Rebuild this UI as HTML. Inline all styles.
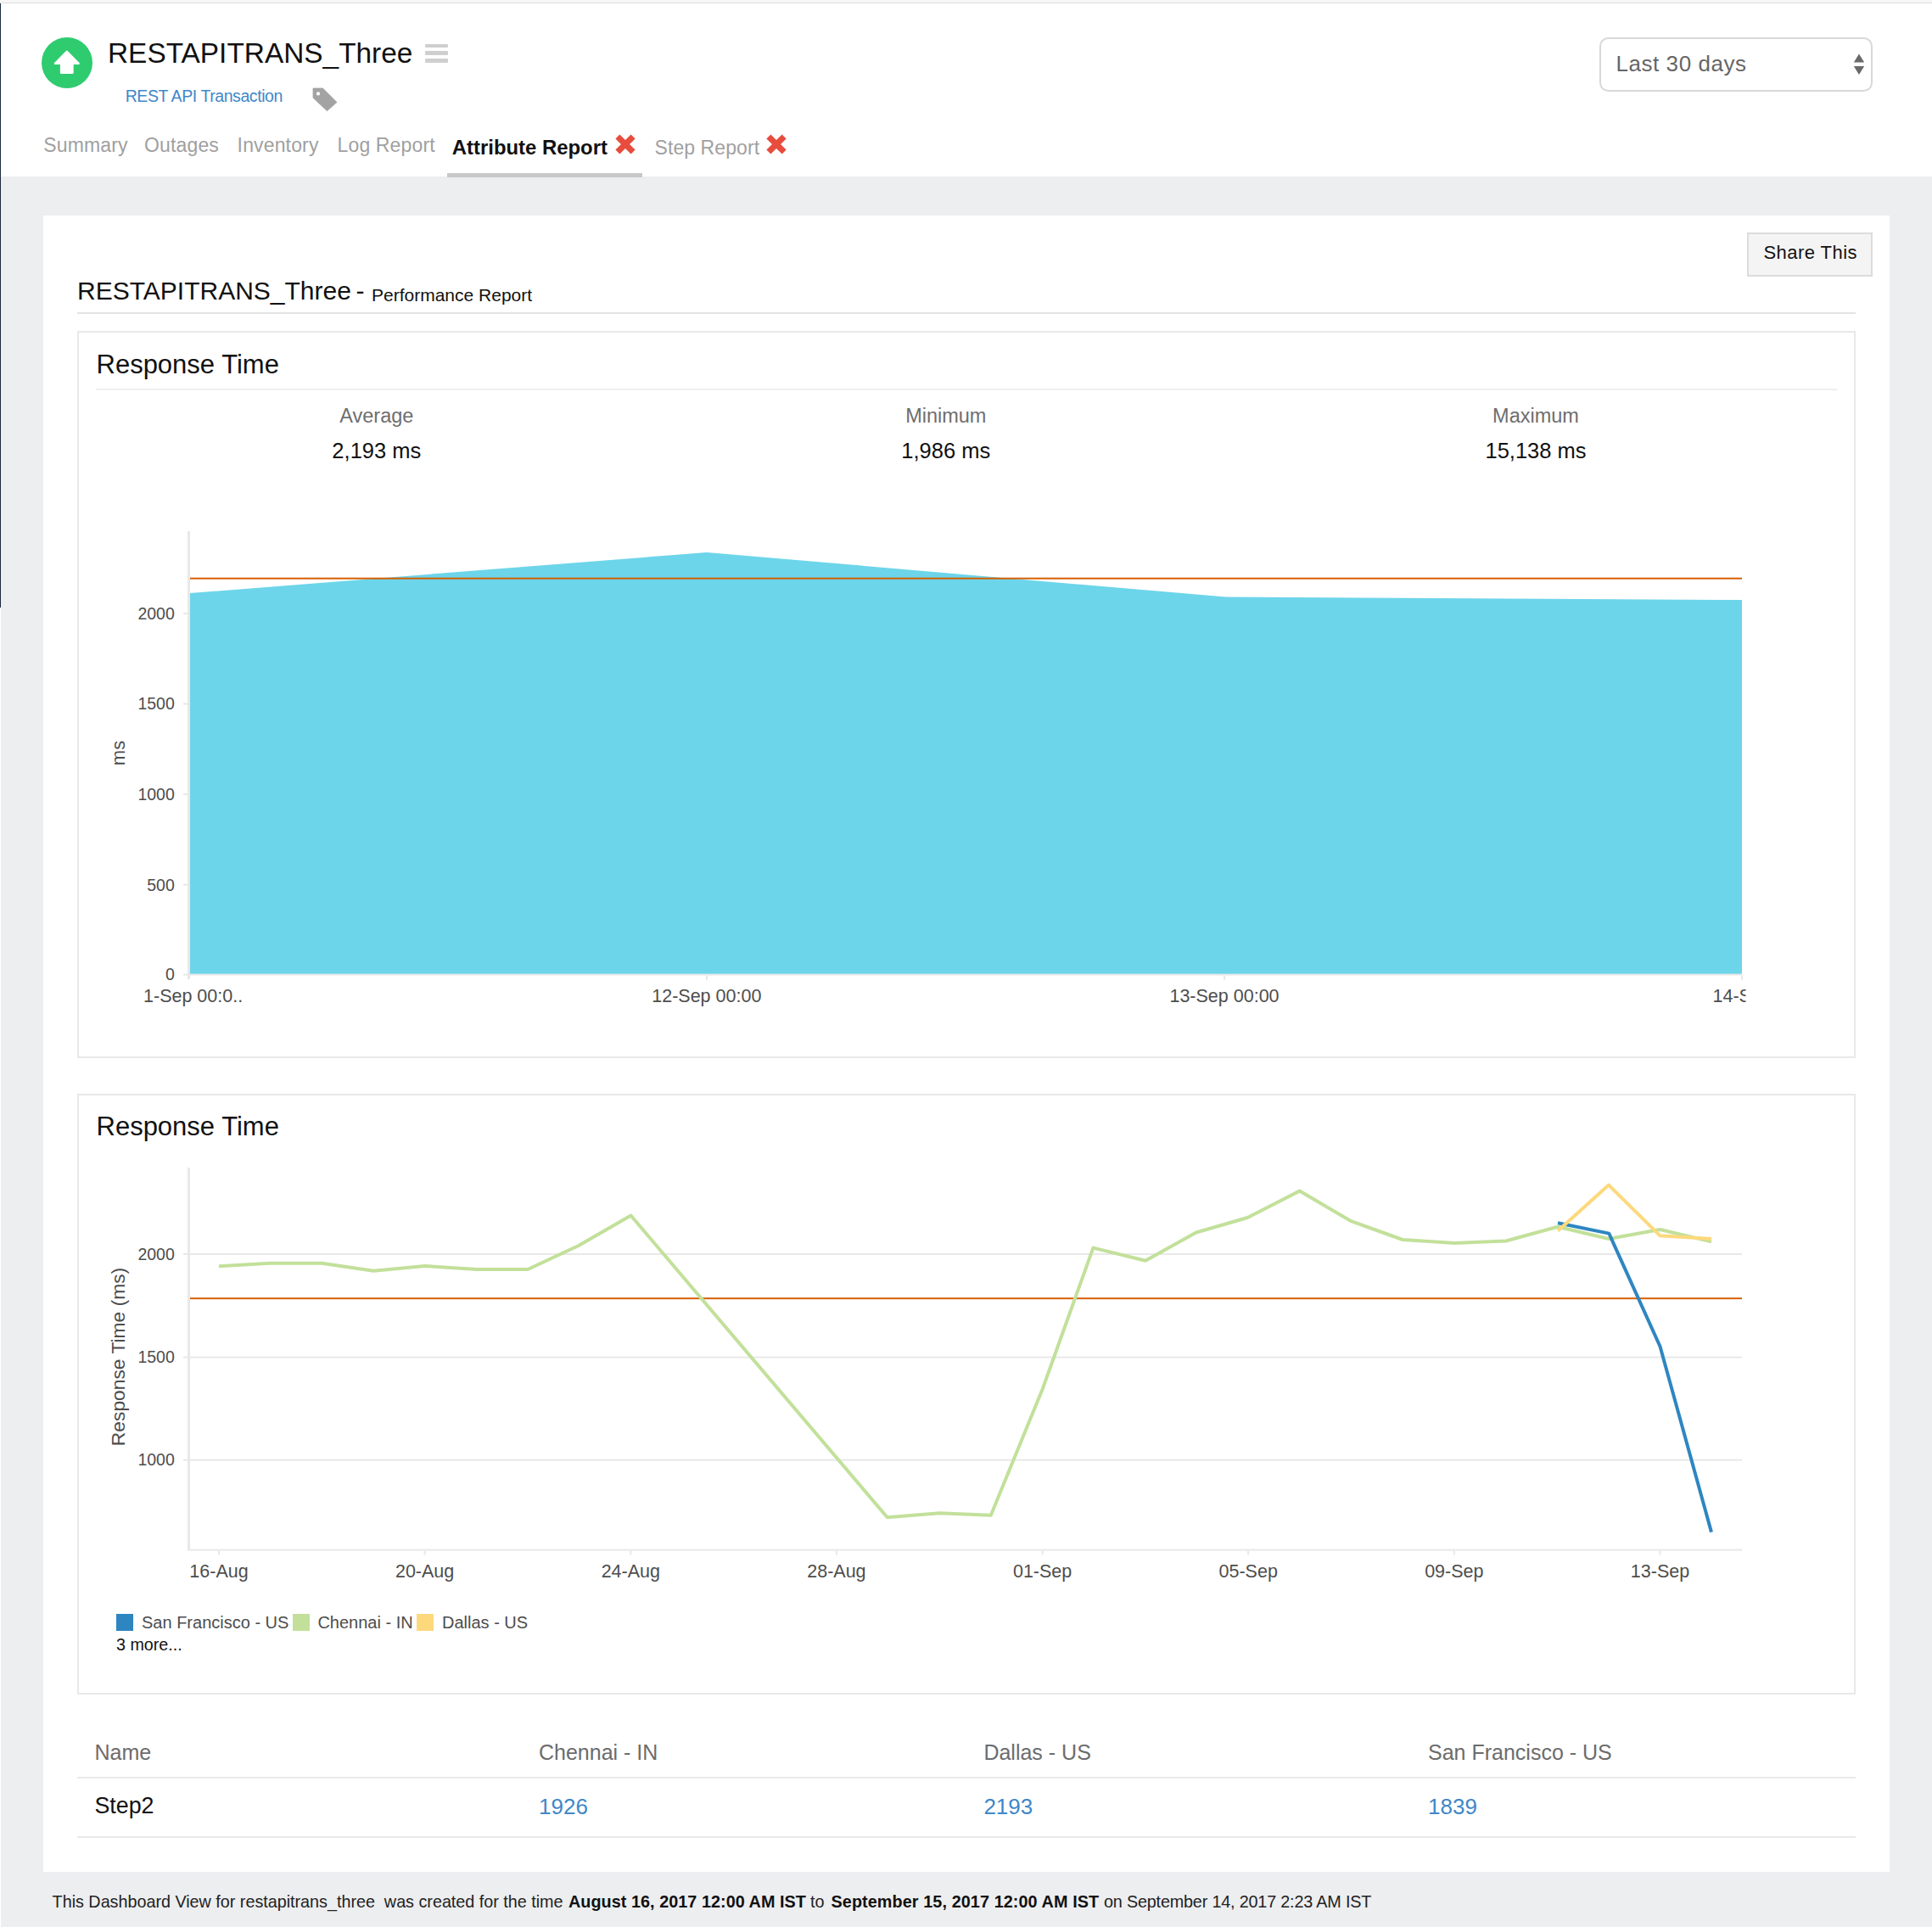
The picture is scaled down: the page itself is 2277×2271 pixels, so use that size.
<!DOCTYPE html>
<html><head><meta charset="utf-8"><style>
html,body{margin:0;padding:0}
body{width:2277px;height:2271px;position:relative;overflow:hidden;background:#edeef0;font-family:'Liberation Sans', sans-serif}
.t{position:absolute;line-height:1;white-space:nowrap}
</style></head><body>
<div style="position:absolute;left:0px;top:0px;width:2277px;height:208px;background:#fff"></div>
<div style="position:absolute;left:0px;top:0px;width:2277px;height:3px;background:#f7f7f7"></div>
<div style="position:absolute;left:0px;top:3px;width:2277px;height:1px;background:#dedede"></div>
<div style="position:absolute;left:0px;top:4px;width:1.3px;height:712px;background:#1c2b3d"></div>
<div style="position:absolute;left:0px;top:716px;width:1px;height:1555px;background:#fff"></div>
<svg style="position:absolute;left:49px;top:44px" width="60" height="60" viewBox="0 0 60 60"><circle cx="30" cy="30" r="30" fill="#2ecc6f"/><path d="M29.8 17 L43.6 30.8 L36.4 30.8 L36.4 41.7 L23.2 41.7 L23.2 30.8 L16 30.8 Z" fill="#fff" stroke="#fff" stroke-width="2.6" stroke-linejoin="round"/></svg>
<div class="t" style="left:127.0px;top:45.7px;font-size:33.4px;color:#111;font-weight:400;letter-spacing:0px;">RESTAPITRANS_Three</div>
<div style="position:absolute;left:501px;top:51.5px;width:27px;height:4.6px;background:#cfcfcf;border-radius:1px"></div>
<div style="position:absolute;left:501px;top:60.3px;width:27px;height:4.6px;background:#cfcfcf;border-radius:1px"></div>
<div style="position:absolute;left:501px;top:69.3px;width:27px;height:4.6px;background:#cfcfcf;border-radius:1px"></div>
<div class="t" style="left:147.7px;top:103.5px;font-size:19.5px;color:#3f88c8;font-weight:400;letter-spacing:-0.42px;">REST API Transaction</div>
<svg style="position:absolute;left:366px;top:102px" width="34" height="31" viewBox="0 0 34 31"><path d="M3 2 L14.5 2 L31 18.5 L19.5 28.7 L3 13.3 Z" fill="#a3a3a3" stroke="#a3a3a3" stroke-width="0.8" stroke-linejoin="round"/><circle cx="9" cy="8.4" r="2.1" fill="#fff"/></svg>
<div class="t" style="left:51.3px;top:159.6px;font-size:23px;color:#a0a0a0;font-weight:400;letter-spacing:0.15px;">Summary</div>
<div class="t" style="left:170.0px;top:159.6px;font-size:23px;color:#a0a0a0;font-weight:400;letter-spacing:0.15px;">Outages</div>
<div class="t" style="left:279.6px;top:159.6px;font-size:23px;color:#a0a0a0;font-weight:400;letter-spacing:0.15px;">Inventory</div>
<div class="t" style="left:397.5px;top:159.6px;font-size:23px;color:#a0a0a0;font-weight:400;letter-spacing:0.15px;">Log Report</div>
<div class="t" style="left:532.8px;top:161.5px;font-size:23.9px;color:#111;font-weight:700;letter-spacing:0px;">Attribute Report</div>
<div class="t" style="left:771.5px;top:162.8px;font-size:23px;color:#a0a0a0;font-weight:400;letter-spacing:0.08px;">Step Report</div>
<svg style="position:absolute;left:725px;top:157.6px" width="24" height="24" viewBox="0 0 24 24"><path d="M2.9 2.9 L21.1 21.1 M21.1 2.9 L2.9 21.1" stroke="#e74c3c" stroke-width="7.1" stroke-linecap="butt"/></svg>
<svg style="position:absolute;left:903.3px;top:157.8px" width="24" height="24" viewBox="0 0 24 24"><path d="M2.9 2.9 L21.1 21.1 M21.1 2.9 L2.9 21.1" stroke="#e74c3c" stroke-width="7.1" stroke-linecap="butt"/></svg>
<div style="position:absolute;left:527px;top:204px;width:230px;height:5px;background:#c8c8c8"></div>
<div style="position:absolute;left:1885px;top:44px;width:322px;height:63.5px;box-sizing:border-box;border:2px solid #d8d8d8;border-radius:10.5px;background:#fff"></div>
<div class="t" style="left:1904.5px;top:61.7px;font-size:26px;color:#666;font-weight:400;letter-spacing:0.55px;">Last 30 days</div>
<svg style="position:absolute;left:2184px;top:63px" width="14" height="26" viewBox="0 0 14 26"><path d="M7 0.4 L13.2 10.4 L0.8 10.4 Z M0.8 15 L13.2 15 L7 25 Z" fill="#6a6a6a"/></svg>
<div style="position:absolute;left:51px;top:254px;width:2176px;height:1952px;background:#fff"></div>
<div style="position:absolute;left:2059px;top:274px;width:148px;height:52px;box-sizing:border-box;border:2px solid #dcdcdc;background:#f4f4f4"></div>
<div class="t" style="left:2078.5px;top:287.4px;font-size:22px;color:#111;font-weight:400;letter-spacing:0.45px;">Share This</div>
<div class="t" style="left:91.0px;top:327.6px;font-size:30px;color:#111;font-weight:400;letter-spacing:0px;">RESTAPITRANS_Three</div>
<div class="t" style="left:419.5px;top:327.6px;font-size:30px;color:#111;font-weight:400;letter-spacing:0px;">-</div>
<div class="t" style="left:438.0px;top:336.7px;font-size:21px;color:#111;font-weight:400;letter-spacing:0px;">Performance Report</div>
<div style="position:absolute;left:91px;top:368px;width:2096px;height:2px;background:#e3e3e3"></div>
<div style="position:absolute;left:91px;top:390px;width:2096px;height:857px;box-sizing:border-box;border:2px solid #e8e8e8"></div>
<div class="t" style="left:113.5px;top:413.8px;font-size:31px;color:#111;font-weight:400;letter-spacing:0px;">Response Time</div>
<div style="position:absolute;left:113px;top:458px;width:2052px;height:2px;background:#efefef"></div>
<div class="t" style="left:-556.2px;width:2000px;text-align:center;top:479.1px;font-size:23.5px;color:#6e6e6e;font-weight:400;letter-spacing:0px;">Average</div>
<div class="t" style="left:-556.2px;width:2000px;text-align:center;top:518.6px;font-size:25.5px;color:#111;font-weight:400;letter-spacing:0px;">2,193 ms</div>
<div class="t" style="left:114.8px;width:2000px;text-align:center;top:479.1px;font-size:23.5px;color:#6e6e6e;font-weight:400;letter-spacing:0px;">Minimum</div>
<div class="t" style="left:114.8px;width:2000px;text-align:center;top:518.6px;font-size:25.5px;color:#111;font-weight:400;letter-spacing:0px;">1,986 ms</div>
<div class="t" style="left:810.0px;width:2000px;text-align:center;top:479.1px;font-size:23.5px;color:#6e6e6e;font-weight:400;letter-spacing:0px;">Maximum</div>
<div class="t" style="left:810.0px;width:2000px;text-align:center;top:518.6px;font-size:25.5px;color:#111;font-weight:400;letter-spacing:0px;">15,138 ms</div>
<div style="position:absolute;left:91px;top:1289px;width:2096px;height:708px;box-sizing:border-box;border:2px solid #e8e8e8"></div>
<div class="t" style="left:113.5px;top:1311.8px;font-size:31px;color:#111;font-weight:400;letter-spacing:0px;">Response Time</div>
<svg style="position:absolute;left:0;top:0" width="2277" height="2271" font-family="Liberation Sans, sans-serif"><polygon points="224,699 833,651 1445,703.5 2053,707 2053,1148.6 224,1148.6" fill="#6dd5ea"/><rect x="221" y="626" width="3" height="528" fill="#e8e8e8"/><rect x="221" y="1147.6" width="1832" height="2" fill="#e8e8e8"/><rect x="216" y="722" width="5" height="2" fill="#e8e8e8"/><text x="205.8" y="729.8" text-anchor="end" font-size="19.5" fill="#4d4d4d">2000</text><rect x="216" y="828.5" width="5" height="2" fill="#e8e8e8"/><text x="205.8" y="836.3" text-anchor="end" font-size="19.5" fill="#4d4d4d">1500</text><rect x="216" y="935" width="5" height="2" fill="#e8e8e8"/><text x="205.8" y="942.8" text-anchor="end" font-size="19.5" fill="#4d4d4d">1000</text><rect x="216" y="1041.7" width="5" height="2" fill="#e8e8e8"/><text x="205.8" y="1049.5" text-anchor="end" font-size="19.5" fill="#4d4d4d">500</text><rect x="216" y="1147.6" width="5" height="2" fill="#e8e8e8"/><text x="205.8" y="1155.3999999999999" text-anchor="end" font-size="19.5" fill="#4d4d4d">0</text><rect x="832" y="1149.6" width="2" height="5" fill="#e8e8e8"/><rect x="1442" y="1149.6" width="2" height="5" fill="#e8e8e8"/><rect x="2052" y="1149.6" width="2" height="5" fill="#e8e8e8"/><rect x="224" y="680.7" width="1829" height="2" fill="#d65f02"/><text x="147" y="887.5" transform="rotate(-90 147 887.5)" text-anchor="middle" font-size="22" fill="#4d4d4d">ms</text><text x="227.6" y="1180.7" text-anchor="middle" font-size="21.5" fill="#4d4d4d">1-Sep 00:0..</text><text x="832.8" y="1180.7" text-anchor="middle" font-size="21.5" fill="#4d4d4d">12-Sep 00:00</text><text x="1443" y="1180.7" text-anchor="middle" font-size="21.5" fill="#4d4d4d">13-Sep 00:00</text><clipPath id="c14"><rect x="2000" y="1150" width="57.5" height="50"/></clipPath><text x="2018.5" y="1180.7" font-size="21.5" fill="#4d4d4d" clip-path="url(#c14)">14-Sep 00:00</text><rect x="221" y="1376" width="3" height="451" fill="#e8e8e8"/><rect x="216" y="1477" width="1837" height="2" fill="#e8e8e8"/><text x="205.8" y="1484.8" text-anchor="end" font-size="19.5" fill="#4d4d4d">2000</text><rect x="216" y="1598.6" width="1837" height="2" fill="#e8e8e8"/><text x="205.8" y="1606.3999999999999" text-anchor="end" font-size="19.5" fill="#4d4d4d">1500</text><rect x="216" y="1719.6" width="1837" height="2" fill="#e8e8e8"/><text x="205.8" y="1727.3999999999999" text-anchor="end" font-size="19.5" fill="#4d4d4d">1000</text><rect x="221" y="1825.6" width="1832" height="2" fill="#e8e8e8"/><rect x="224" y="1529.2" width="1829" height="2" fill="#d65f02"/><rect x="257.0" y="1827.5" width="2" height="5" fill="#e8e8e8"/><text x="258.0" y="1858.9" text-anchor="middle" font-size="21.5" fill="#4d4d4d">16-Aug</text><rect x="499.6" y="1827.5" width="2" height="5" fill="#e8e8e8"/><text x="500.6" y="1858.9" text-anchor="middle" font-size="21.5" fill="#4d4d4d">20-Aug</text><rect x="742.3" y="1827.5" width="2" height="5" fill="#e8e8e8"/><text x="743.3" y="1858.9" text-anchor="middle" font-size="21.5" fill="#4d4d4d">24-Aug</text><rect x="984.9" y="1827.5" width="2" height="5" fill="#e8e8e8"/><text x="985.9" y="1858.9" text-anchor="middle" font-size="21.5" fill="#4d4d4d">28-Aug</text><rect x="1227.6" y="1827.5" width="2" height="5" fill="#e8e8e8"/><text x="1228.6" y="1858.9" text-anchor="middle" font-size="21.5" fill="#4d4d4d">01-Sep</text><rect x="1470.2" y="1827.5" width="2" height="5" fill="#e8e8e8"/><text x="1471.2" y="1858.9" text-anchor="middle" font-size="21.5" fill="#4d4d4d">05-Sep</text><rect x="1712.8" y="1827.5" width="2" height="5" fill="#e8e8e8"/><text x="1713.8" y="1858.9" text-anchor="middle" font-size="21.5" fill="#4d4d4d">09-Sep</text><rect x="1955.5" y="1827.5" width="2" height="5" fill="#e8e8e8"/><text x="1956.5" y="1858.9" text-anchor="middle" font-size="21.5" fill="#4d4d4d">13-Sep</text><text x="146.8" y="1599" transform="rotate(-90 146.8 1599)" text-anchor="middle" font-size="22.8" fill="#4d4d4d">Response Time (ms)</text><polyline points="258,1492.3 317.8,1488.7 379.3,1488.7 440.2,1497.8 500.7,1492 562.3,1496 622,1496 681.9,1468 743.5,1432.5 1045.7,1788.3 1107.2,1783.3 1167.8,1785.8 1228.6,1637.2 1288.4,1470.6 1350,1485.8 1409.8,1452.5 1470.3,1435 1531.6,1403.6 1592.5,1439.2 1653.1,1461 1714.3,1465 1774.8,1462.5 1836,1445.8 1896,1460 1956.5,1449 2017,1463.4" fill="none" stroke="#c2e09a" stroke-width="4" stroke-linejoin="round"/><polyline points="1836,1441.2 1896.3,1453.6 1956.5,1586.7 2017,1805.6" fill="none" stroke="#2e86c1" stroke-width="4" stroke-linejoin="round"/><polyline points="1836.2,1450.6 1896,1396.6 1956.5,1456.3 2017,1460" fill="none" stroke="#fdd97c" stroke-width="4" stroke-linejoin="round"/></svg>
<div style="position:absolute;left:137px;top:1902px;width:20px;height:20px;background:#2e86c1"></div>
<div style="position:absolute;left:345px;top:1902px;width:20px;height:20px;background:#c2e09a"></div>
<div style="position:absolute;left:491px;top:1902px;width:20px;height:20px;background:#fdd97c"></div>
<div class="t" style="left:167.0px;top:1902.3px;font-size:20px;color:#4d4d4d;font-weight:400;letter-spacing:0px;">San Francisco - US</div>
<div class="t" style="left:374.4px;top:1902.3px;font-size:20px;color:#4d4d4d;font-weight:400;letter-spacing:0px;">Chennai - IN</div>
<div class="t" style="left:521.0px;top:1902.3px;font-size:20px;color:#4d4d4d;font-weight:400;letter-spacing:0px;">Dallas - US</div>
<div class="t" style="left:137.0px;top:1928.7px;font-size:19.7px;color:#111;font-weight:400;letter-spacing:0px;">3 more...</div>
<div class="t" style="left:111.5px;top:2053.3px;font-size:25px;color:#6c6c6c;font-weight:400;letter-spacing:0px;">Name</div>
<div class="t" style="left:635.0px;top:2053.3px;font-size:25px;color:#6c6c6c;font-weight:400;letter-spacing:0px;">Chennai - IN</div>
<div class="t" style="left:1159.4px;top:2053.3px;font-size:25px;color:#6c6c6c;font-weight:400;letter-spacing:0px;">Dallas - US</div>
<div class="t" style="left:1683.0px;top:2053.3px;font-size:25px;color:#6c6c6c;font-weight:400;letter-spacing:0px;">San Francisco - US</div>
<div style="position:absolute;left:91px;top:2094px;width:2096px;height:2px;background:#e9e9e9"></div>
<div class="t" style="left:111.5px;top:2115.3px;font-size:26.8px;color:#111;font-weight:400;letter-spacing:0px;">Step2</div>
<div class="t" style="left:635.0px;top:2116.0px;font-size:26px;color:#3f88c8;font-weight:400;letter-spacing:0px;">1926</div>
<div class="t" style="left:1159.4px;top:2116.0px;font-size:26px;color:#3f88c8;font-weight:400;letter-spacing:0px;">2193</div>
<div class="t" style="left:1683.0px;top:2116.0px;font-size:26px;color:#3f88c8;font-weight:400;letter-spacing:0px;">1839</div>
<div style="position:absolute;left:91px;top:2164px;width:2096px;height:2px;background:#e9e9e9"></div>
<div class="t" style="left:61.6px;top:2232.2px;font-size:19.8px;color:#222;font-weight:400;letter-spacing:-0.02px;">This Dashboard View for restapitrans_three&nbsp; was created for the time</div>
<div class="t" style="left:670.0px;top:2232.2px;font-size:19.8px;color:#111;font-weight:700;letter-spacing:0.05px;">August 16, 2017 12:00 AM IST</div>
<div class="t" style="left:955.0px;top:2232.2px;font-size:19.8px;color:#222;font-weight:400;letter-spacing:0px;">to</div>
<div class="t" style="left:979.5px;top:2232.2px;font-size:19.8px;color:#111;font-weight:700;letter-spacing:0.1px;">September 15, 2017 12:00 AM IST</div>
<div class="t" style="left:1301.0px;top:2232.2px;font-size:19.8px;color:#222;font-weight:400;letter-spacing:-0.18px;">on September 14, 2017 2:23 AM IST</div>
</body></html>
